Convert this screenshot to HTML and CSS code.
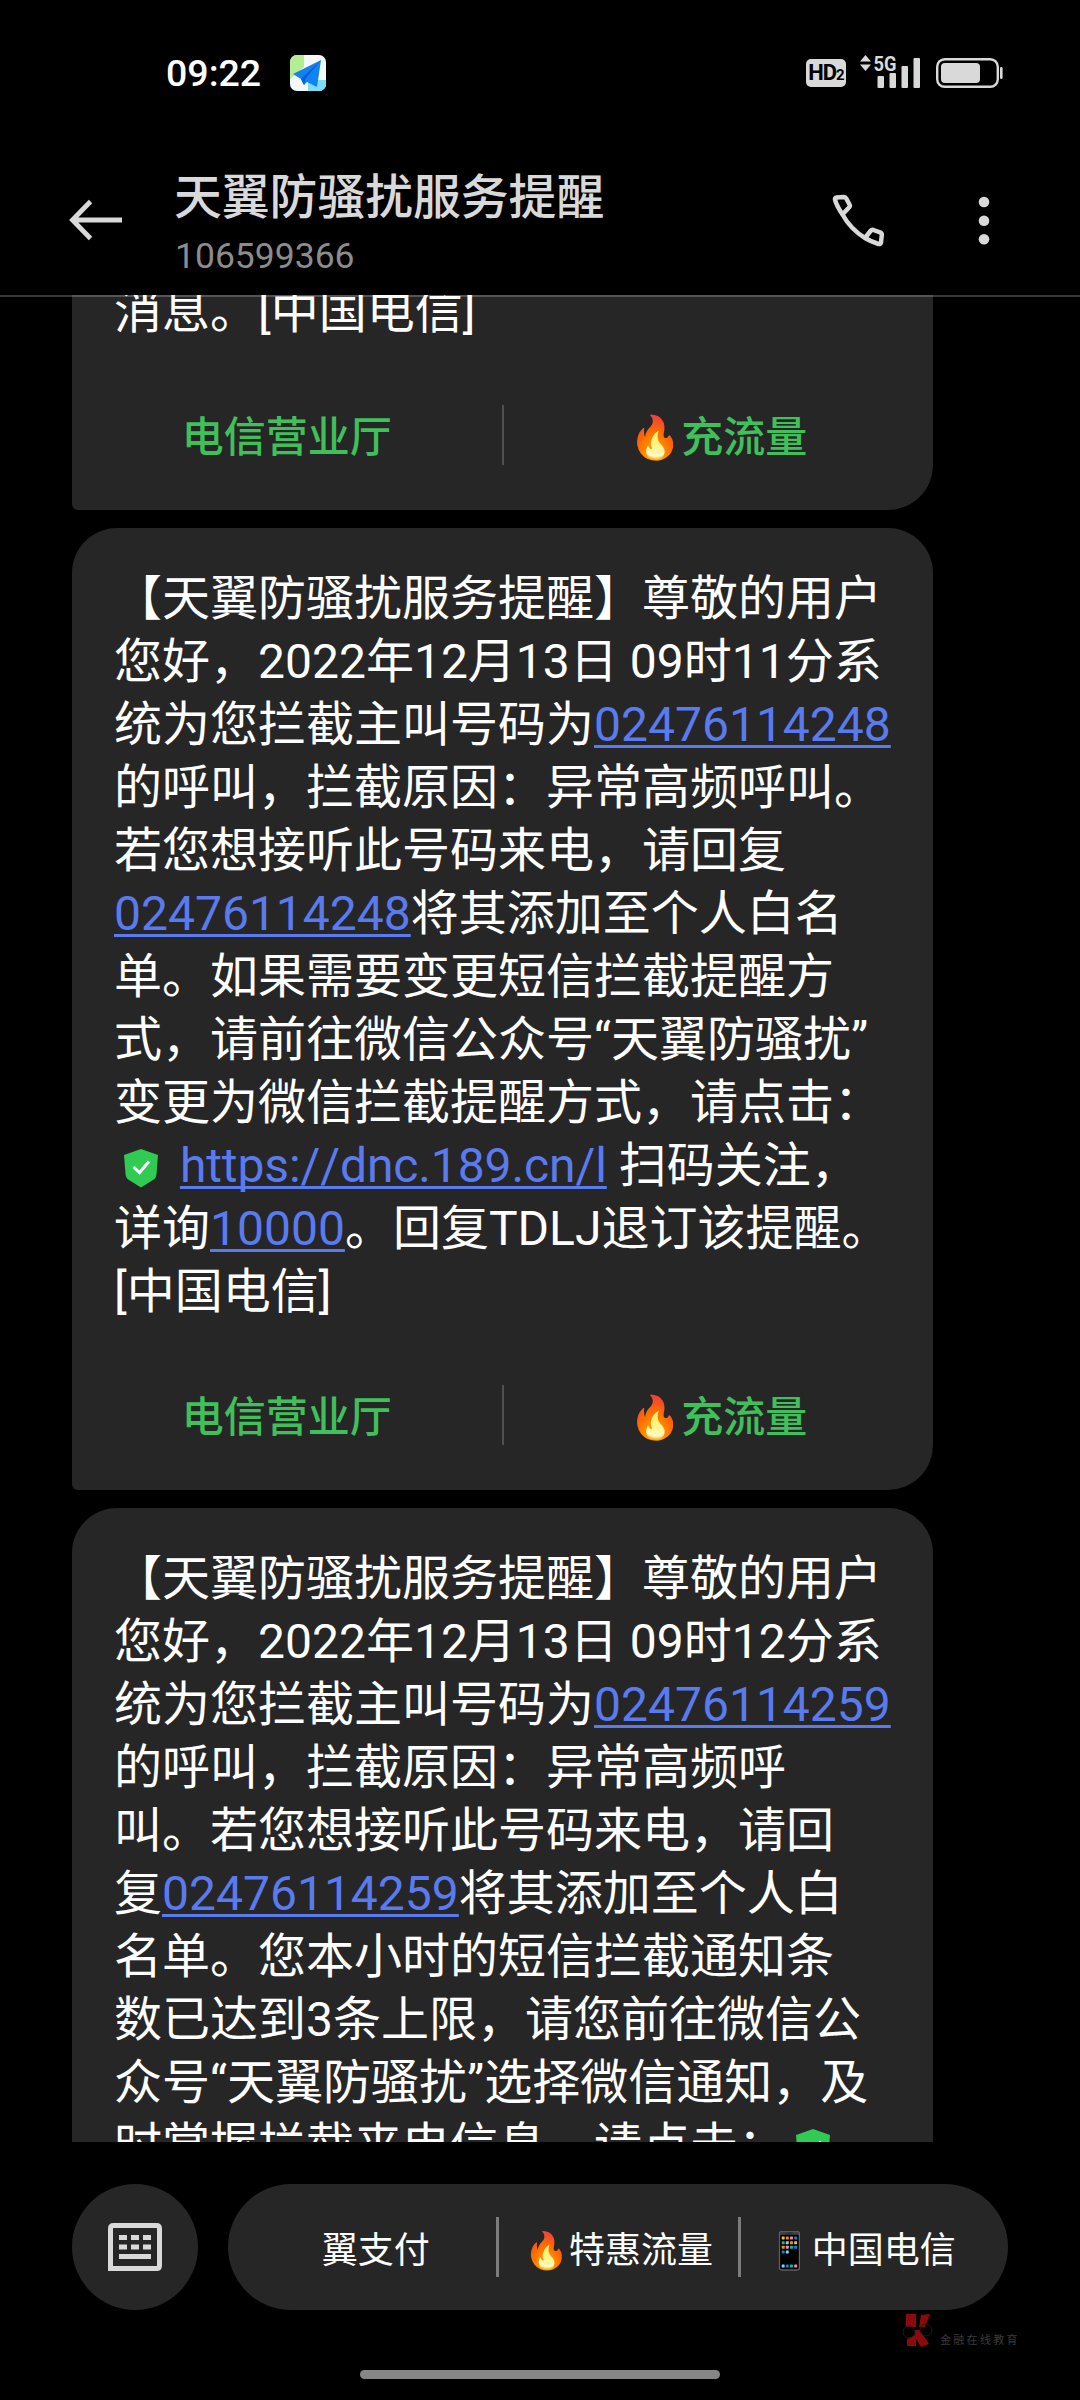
FILE: index.html
```html
<!DOCTYPE html>
<html lang="zh-CN">
<head>
<meta charset="utf-8">
<title>天翼防骚扰服务提醒</title>
<link rel="stylesheet" href="styles.css">
</head>
<body>
<div class="screen">
  <div class="status">
    <span class="clock">09:22</span>
    <svg class="app-icon" width="36" height="36" viewBox="0 0 36 36">
      <defs><clipPath id="app"><rect width="36" height="36" rx="7"/></clipPath></defs>
      <g clip-path="url(#app)">
        <rect width="36" height="36" fill="#f4f8fb"/>
        <path d="M0 0h14v12L0 24z" fill="#b4ee94"/>
        <path d="M18 25h18v11H18z" fill="#7fdcf8"/>
        <path d="M31 5 3 19l8 5 3 6 3-3 10 5z" fill="#1183f0"/>
        <path d="M31 5 11 24l3 6 2-7z" fill="#0b5fd0"/>
      </g>
    </svg>
    <div class="status-right">
      <span class="hd">HD<small>2</small></span>
      <svg class="signal" width="62" height="34" viewBox="0 0 62 34">
        <path d="M0 7.5 5.500 1l5.500 6.500zM0 10.500h11L5.500 17z"/>
        <text x="13.500" y="17" textLength="23" lengthAdjust="spacingAndGlyphs">5G</text>
        <rect x="17.500" y="22" width="6.500" height="12" rx="1"/>
        <rect x="29.500" y="19" width="6.500" height="15" rx="1"/>
        <rect x="41.500" y="12" width="6.500" height="22" rx="1"/>
        <rect x="53.500" y="4" width="6.500" height="30" rx="1"/>
      </svg>
      <svg class="battery" width="68" height="30" viewBox="0 0 68 30">
        <rect x="1.200" y="1.200" width="60.600" height="27.600" rx="7.500" fill="none" stroke="#d9d9d9" stroke-width="2.400"/>
        <rect x="5" y="5" width="39" height="20" rx="4" fill="#d9d9d9"/>
        <rect x="64" y="9" width="2.600" height="12" rx="1.300" fill="#d9d9d9"/>
      </svg>
    </div>
  </div>

  <header class="header">
    <svg class="back" width="54" height="42" viewBox="0 0 54 42" fill="none" stroke="#d9d9d9" stroke-width="4.800">
      <path d="M21.500 2.500 3.500 21l18 18.500M3.500 21H53"/>
    </svg>
    <div class="contact">
      <h1>天翼防骚扰服务提醒</h1>
      <p>106599366</p>
    </div>
    <svg class="call" width="56" height="56" viewBox="0 0 56 56" fill="none" stroke="#d9d9d9" stroke-width="4.500" stroke-linejoin="round">
      <path d="M6.500 4.500 14 4q1.500 0 2.300 1.500l3.200 6q.8 1.500-.3 2.800L12.500 21.500C8.500 15.500 6 11 5 6.500q-.3-1.800 1.500-2zM12.500 21.500C18 31.500 26 39.500 35 45l5.500-7q1.200-1.500 3-1l6.500 2.300q2 .8 1.800 2.700l-.8 7.500q-.3 2-2.500 1.500C44 49.500 39 47.500 35 45"/>
    </svg>
    <svg class="more" width="12" height="50" viewBox="0 0 12 50" fill="#d9d9d9">
      <circle cx="6" cy="6" r="5.300"/><circle cx="6" cy="24.700" r="5.300"/><circle cx="6" cy="43.200" r="5.300"/>
    </svg>
  </header>

  <main class="chat">
    <article class="bubble first">
      <p class="text">消息。[中国电信]</p>
      <div class="actions"><a>电信营业厅</a><i></i><a><span class="emoji">🔥</span>充流量</a></div>
    </article>
    <article class="bubble">
      <p class="text">【天翼防骚扰服务提醒】尊敬的用户<br>您好，2022年12月13日 09时11分系<br>统为您拦截主叫号码为<u>02476114248</u><br>的呼叫，拦截原因：异常高频呼叫。<br>若您想接听此号码来电，请回复<br><u>02476114248</u>将其添加至个人白名<br>单。如果需要变更短信拦截提醒方<br>式，请前往微信公众号“天翼防骚扰”<br>变更为微信拦截提醒方式，请点击：<br><svg class="shield" width="54" height="40" viewBox="0 0 54 40"><path d="M27 1 44 7l-1.500 19q-.3 4-3.500 6l-12 7.500L15 32q-3.200-2-3.500-6L10 7z" fill="#2fcb52"/><path d="m19.500 19 6 5.500 9.500-11" fill="none" stroke="#fff" stroke-width="3"/></svg> <u class="url">https://dnc.189.cn/l</u> 扫码关注，<br>详询<u>10000</u>。回复TDLJ退订该提醒。<br>[中国电信]</p>
      <div class="actions"><a>电信营业厅</a><i></i><a><span class="emoji">🔥</span>充流量</a></div>
    </article>
    <article class="bubble">
      <p class="text">【天翼防骚扰服务提醒】尊敬的用户<br>您好，2022年12月13日 09时12分系<br>统为您拦截主叫号码为<u>02476114259</u><br>的呼叫，拦截原因：异常高频呼<br>叫。若您想接听此号码来电，请回<br>复<u>02476114259</u>将其添加至个人白<br>名单。您本小时的短信拦截通知条<br>数已达到3条上限，请您前往微信公<br>众号“天翼防骚扰”选择微信通知，及<br>时掌握拦截来电信息，请点击：<svg class="shield" width="54" height="40" viewBox="0 0 54 40"><path d="M27 1 44 7l-1.500 19q-.3 4-3.500 6l-12 7.500L15 32q-3.200-2-3.500-6L10 7z" fill="#2fcb52"/><path d="m19.500 19 6 5.500 9.500-11" fill="none" stroke="#fff" stroke-width="3"/></svg></p>
    </article>
  </main>

  <footer class="footer">
    <div class="keyboard">
      <svg width="54" height="48" viewBox="0 0 54 48">
        <path d="M2.500 45.500V5.500q0-3 3-3h43q3 0 3 3v37q0 3-3 3z" fill="none" stroke="#d9d9d9" stroke-width="5"/>
        <path d="M11 12h8v5h-8zm12 0h8v5h-8zm12 0h8v5h-8zM11 21.500h8v5h-8zm12 0h8v5h-8zm12 0h8v5h-8zM11 31h32v5H11z" fill="#d9d9d9"/>
      </svg>
    </div>
    <nav class="menu"><a>翼支付</a><i></i><a><span class="emoji">🔥</span>特惠流量</a><i></i><a><span class="emoji">📱</span>中国电信</a></nav>
  </footer>
  <div class="watermark">
    <svg width="32" height="34" viewBox="0 0 32 34">
      <path d="M4 1h10v13H4zM19 2l9-1-5 13h-6zM13 17h5l9 14-8 3-5-8v7H5v-7l8-4z" fill="#8c0a0c"/>
      <circle cx="7" cy="19" r="6" fill="none" stroke="#1c1c1c"/><circle cx="24" cy="17" r="6" fill="none" stroke="#1c1c1c"/>
    </svg>
    <span>金融在线教育</span>
  </div>
  <div class="home-bar"></div>
</div>
</body>
</html>
```
FILE: styles.css
```css
* { box-sizing: border-box; margin: 0; padding: 0; }
body { background: #000; font-family: Roboto, "Noto Sans CJK SC", sans-serif; color: #fff; text-spacing-trim: space-all; font-kerning: none; }
svg { display: block; flex: none; }
.screen { position: relative; width: 1080px; height: 2400px; overflow: hidden; display: flex; flex-direction: column; background: #000; }
.status { height: 146px; display: flex; align-items: center; padding: 0 76px 0 166px; }
.clock { width: 124px; font-size: 37.500px; font-weight: 500; line-height: 40px; padding-bottom: 1px; }
.status-right { margin-left: auto; display: flex; align-items: center; }
.hd { width: 40px; height: 28px; border-radius: 5px; background: #d9d9d9; color: #000; font-size: 22px; line-height: 28px; font-weight: 700; text-align: center; letter-spacing: -1px; white-space: nowrap; }
.hd small { font-size: 15px; }
.signal { margin: 0 14px; fill: #d9d9d9; font-size: 21px; font-weight: 700; position: relative; top: -2px; overflow: visible; }
.header { height: 149px; display: flex; align-items: center; padding-left: 69px; }
.back { margin-bottom: 1px; }
.contact { width: 656px; margin-left: 51px; padding: 2px 0 0 1px; }
.contact h1 { margin-left: -1px; font-size: 47.800px; line-height: 64px; font-weight: 500; color: #d9d9d9; }
.contact p { font-size: 35.500px; line-height: 44px; padding-top: 4px; color: #8c8c8c; }
.more { margin-left: 92px; }
.chat { position: relative; height: 1847px; padding-left: 72px; overflow: hidden; display: flex; flex-direction: column; gap: 18px; }
.chat::after { content: ""; position: absolute; left: 0; top: 0; width: 100%; height: 2px; background: rgba(255, 255, 255, .22); }
.bubble { flex: none; width: 861px; padding: 39px 0 45px; border-radius: 45px 45px 45px 6px; background: #262626; }
.first { margin-top: -54px; }
.text { padding-left: 42px; font-size: 48px; line-height: 63px; white-space: nowrap; }
.text u { color: #5a7bf0; text-decoration-thickness: 3px; text-underline-offset: 4px; text-decoration-skip-ink: none; }
.text .url { letter-spacing: -.1px; }
.shield { display: inline-block; vertical-align: -6px; }
.actions { display: flex; align-items: center; height: 60px; margin-top: 62px; font-size: 42px; line-height: 60px; font-weight: 500; color: #3fc05a; }
.actions a { padding-top: 5px; }
.actions a, .menu a { flex: 1; text-align: center; white-space: nowrap; }
.actions i { width: 2px; height: 60px; background: #505050; }
.footer { display: flex; gap: 30px; padding: 42px 72px 0; height: 168px; }
.keyboard { width: 126px; height: 126px; border-radius: 50%; background: #262626; display: flex; align-items: center; justify-content: center; }
.menu { flex: 1; height: 126px; border-radius: 63px; background: #262626; display: flex; align-items: center; padding: 0 27px 0 28px; font-size: 36px; }
.menu a { padding-bottom: 1px; }
.menu i { width: 3px; height: 60px; background: #7c7c7c; }
.watermark { display: flex; align-items: flex-end; gap: 6px; padding: 3px 0 0 902px; height: 37px; }
.watermark span { font-size: 11px; line-height: 12px; letter-spacing: 2.300px; color: #3c3c3c; white-space: nowrap; }
.home-bar { width: 360px; height: 9px; margin: 23px auto 0; border-radius: 5px; background: #868686; }
```
